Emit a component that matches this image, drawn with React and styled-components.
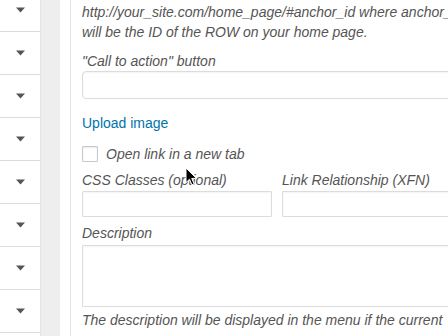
import React from 'react';
import styled, { createGlobalStyle } from 'styled-components';

const GlobalStyle = createGlobalStyle`
  html, body {
    margin: 0;
    padding: 0;
    background: #fff;
    overflow: hidden;
  }
  body {
    font-family: "Liberation Sans", Arial, sans-serif;
    font-size: 14px;
    color: #555;
  }
`;

const Page = styled.div`
  position: relative;
  display: flex;
  width: 448px;
  height: 336px;
  overflow: hidden;
`;

const Sidebar = styled.div`
  width: 40px;
  flex: none;
  border-right: 1px solid #e2e4e7;
  background: #fff;
`;

const SideList = styled.div`
  margin-top: -11px;
`;

const SideRow = styled.div`
  height: 42px;
  border-bottom: 1px solid #dcdcde;
  display: flex;
  align-items: center;
  justify-content: center;
`;

const Gutter = styled.div`
  width: 19px;
  flex: none;
  background: #eeeeee;
`;

const Spacer = styled.div`
  width: 10px;
  flex: none;
  background: #fff;
`;

const Panel = styled.div`
  flex: none;
  width: 420px;
  border-left: 1px solid #e5e5e5;
  padding: 3px 0 0 11px;
  font-style: italic;
`;

const Help = styled.p`
  margin: ${p => p.$top || 0}px 0 0;
  line-height: 19.5px;
  white-space: nowrap;
  color: #555;
`;

const Label = styled.div`
  margin-top: ${p => p.$top || 0}px;
  line-height: 20px;
  color: #555;
  white-space: nowrap;
`;

const Input = styled.div`
  box-sizing: border-box;
  width: ${p => p.$w || 390}px;
  height: ${p => p.$h || 26}px;
  margin-top: ${p => p.$top || 0}px;
  border: 1px solid #dcdcdc;
  border-radius: ${p => (p.$round ? 4 : 1)}px;
  box-shadow: inset 0 1px 2px rgba(0, 0, 0, 0.05);
  background: #fff;
`;

const UploadLink = styled.a`
  display: block;
  margin-top: 14px;
  line-height: 20px;
  font-style: normal;
  color: #0073aa;
  text-decoration: none;
`;

const CheckRow = styled.label`
  display: flex;
  align-items: center;
  gap: 8px;
  margin-top: 13px;
  height: 16px;
`;

const Box = styled.span`
  box-sizing: border-box;
  width: 16px;
  height: 16px;
  border: 1px solid #c8c8c8;
  border-radius: 1px;
  box-shadow: inset 0 1px 2px rgba(0, 0, 0, 0.08);
  background: #fff;
`;

const Columns = styled.div`
  display: grid;
  grid-template-columns: 190px 190px;
  column-gap: 10px;
  margin-top: 8px;
`;

const Pointer = styled.svg`
  position: absolute;
  left: 185px;
  top: 167px;
`;

function Arrow() {
  return (
    <svg width="9" height="6" viewBox="0 0 9 6">
      <path d="M0 0.5h9L4.5 5.5z" fill="#555" />
    </svg>
  );
}

export default function App() {
  const rows = Array.from({ length: 9 });
  return (
    <Page>
      <GlobalStyle />
      <Sidebar>
        <SideList>
          {rows.map((_, i) => (
            <SideRow key={i}>
              <Arrow />
            </SideRow>
          ))}
        </SideList>
      </Sidebar>
      <Gutter />
      <Spacer />
      <Panel>
        <Help>http://your_site.com/home_page/#anchor_id where anchor_id</Help>
        <Help>will be the ID of the ROW on your home page.</Help>
        <Label $top={9}>"Call to action" button</Label>
        <Input $h={28} $round />
        <UploadLink>Upload image</UploadLink>
        <CheckRow>
          <Box />
          <span>Open link in a new tab</span>
        </CheckRow>
        <Columns>
          <div>
            <Label>CSS Classes (optional)</Label>
            <Input $w={190} $top={1} />
          </div>
          <div>
            <Label>Link Relationship (XFN)</Label>
            <Input $w={190} $top={1} />
          </div>
        </Columns>
        <Label $top={6}>Description</Label>
        <Input $h={62} $top={2} />
        <Help $top={4}>The description will be displayed in the menu if the current</Help>
      </Panel>
      <Pointer width="12" height="19" viewBox="0 0 12 19">
        <path d="M1 1v14.5l3.5-3.3 2.4 5.6 2.2-1-2.4-5.4h4.8z" fill="#000" stroke="#fff" strokeWidth="1" strokeLinejoin="round" />
      </Pointer>
    </Page>
  );
}
